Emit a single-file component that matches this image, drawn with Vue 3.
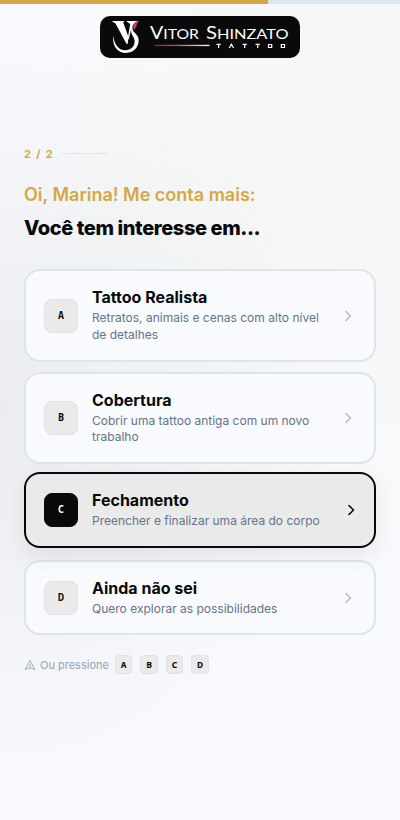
<script setup>
const options = [
  { key: 'A', title: 'Tattoo Realista', text: 'Retratos, animais e cenas com alto nível de detalhes' },
  { key: 'B', title: 'Cobertura', text: 'Cobrir uma tattoo antiga com um novo trabalho' },
  { key: 'C', title: 'Fechamento', text: 'Preencher e finalizar uma área do corpo', active: true },
  { key: 'D', title: 'Ainda não sei', text: 'Quero explorar as possibilidades' }
]
</script>

<template>
  <main class="page">
    <div class="progress"><div class="bar"></div></div>
    <header class="brand">
      <svg width="200" height="42" viewBox="0 0 200 42" role="img" aria-label="Vitor Shinzato Tattoo">
        <defs>
          <linearGradient id="line"><stop offset="0" stop-color="#a51f30" /><stop offset=".4" stop-color="#bd505c" /><stop offset="1" stop-color="#fff" /></linearGradient>
        </defs>
        <path d="M11.700 5H24.500l-1.300 1.500 5.300 14.500L27.600 28h-1L15.500 7.500Z" fill="#fff" />
        <path d="M26 5h13.200c-4.700.8-7.200 3.600-6.700 8 .4 3.800 6.200 5.400 6.200 11.300 0 7.300-5.400 12.600-12.700 12.600-8.300 0-14.200-6.700-12.600-17.500.4 8.200 4.900 14.800 11.900 14.800 5.500 0 9.300-3.700 9.300-9 0-4.600-4-6.200-3.500-11.700L28.600 24l-.7-2.500L30.200 8Z" fill="#fff" />
        <path d="M39.200 5c-3.600.2-6 2.200-6 5.800 0 1.200.6 2.200 1.500 3.200.1-1.500.7-2.700 1.800-3.800.1-2.200 1-3.800 2.700-5.200Z" fill="#d3405a" />
        <g fill="#fff" font-family="Lato, sans-serif">
          <text x="50" y="23" font-size="17" textLength="49" lengthAdjust="spacingAndGlyphs">V<tspan font-size="13.700">ITOR</tspan></text>
          <text x="106" y="23" font-size="17" textLength="82.500" lengthAdjust="spacingAndGlyphs">S<tspan font-size="13.700">HINZATO</tspan></text>
        </g>
        <rect x="54.500" y="28.800" width="55" height="1.300" fill="url(#line)" />
        <path d="M116.500 28.400h4.200M118.600 28.400V32M129.200 32l2.200-3.800 2.200 3.800M142.600 28.400h4.200M144.700 28.400V32M155.600 28.400h4.200M157.700 28.400V32M168.500 28.500h3.200v3h-3.200ZM181.300 28.500h3.200v3h-3.200Z" fill="none" stroke="#fff" stroke-width="1.200" />
      </svg>
    </header>

    <section class="content">
      <div class="step"><span>2 / 2</span><i></i></div>
      <p class="greeting">Oi, Marina! Me conta mais:</p>
      <h1>Você tem interesse em...</h1>
      <div class="options">
        <button v-for="o in options" :key="o.key" class="option" :class="{ active: o.active }">
          <span class="letter">{{ o.key }}</span>
          <span class="copy"><strong>{{ o.title }}</strong><small>{{ o.text }}</small></span>
          <svg class="chevron" width="16" height="16" viewBox="0 0 16 16" fill="none" stroke="currentColor" stroke-width="1.600" stroke-linecap="round" stroke-linejoin="round"><path d="m6 3.500 4.500 4.500L6 12.500" /></svg>
        </button>
      </div>
      <div class="hint">
        <svg width="12" height="12" viewBox="0 0 12 12" fill="none" stroke="currentColor" stroke-width=".9" stroke-linejoin="round"><path d="M6 1.500 10.800 10.500 6 8.700 1.200 10.500ZM6 5v3.700" /></svg>
        <span>Ou pressione</span>
        <kbd v-for="o in options" :key="o.key">{{ o.key }}</kbd>
      </div>
    </section>
  </main>
</template>

<style>
body { margin: 0; }
</style>
<style scoped>
* { box-sizing: border-box; }
.page {
  height: 820px; overflow: hidden; font-family: Inter, sans-serif; color: #0a0a0a;
  background:
    radial-gradient(ellipse 85% 48% at 0% 50%, rgba(10, 10, 10, .06), transparent 100%),
    radial-gradient(ellipse 80% 50% at 90% 20%, rgba(212, 168, 67, .045), rgba(212, 168, 67, .035) 40%, transparent 100%),
    #f8fafd;
}
.progress { height: 4px; background: #dde5ee; }
.bar { width: 67%; height: 100%; background: #d4a843; }
.brand { height: 42px; width: 200px; margin: 12px auto 0; border-radius: 10px; background: #0a0a0a; }
.brand svg { display: block; }
.content { padding: 89px 24px 0; }
.step { display: flex; align-items: center; gap: 7px; height: 13px; color: #d4a843; font-size: 11px; font-weight: 700; letter-spacing: 1.320px; }
.step i { width: 48px; height: 1px; background: #dde5ee; }
.greeting { margin: 21px 0 0; font-size: 18px; line-height: 27px; font-weight: 600; color: #d4a843; }
h1 { margin: 7px 0 0; font-size: 20px; line-height: 26px; font-weight: 800; letter-spacing: -.4px; }
.options { display: flex; flex-direction: column; gap: 10px; margin-top: 28.400px; }
.option {
  display: flex; align-items: center; gap: 14px; width: 352px; padding: 16px 18px;
  border: 2px solid #dde5ec; border-radius: 16px; background: #f8fafd; color: inherit; font: inherit; text-align: left;
}
.option.active { border-color: #0a0a0a; background: #eaeaea; box-shadow: 0 8px 24px rgba(10, 10, 10, .08); transform: translateY(-2px); }
.letter { display: flex; align-items: center; justify-content: center; flex: none; width: 34px; height: 34px; padding-bottom: 2px; border: 1px solid #e0e4e7; border-radius: 8px; background: #eaeaea; font: 700 10px "Noto Sans Mono", "Noto Sans Mono CJK SC", "Noto Sans", sans-serif; }
.active .letter { background: #0a0a0a; border-color: #0a0a0a; color: #fff; }
.copy { flex: 1; display: flex; flex-direction: column; gap: 2px; }
.copy strong { font-size: 16px; line-height: 20.800px; font-weight: 700; }
.copy small { font-size: 12px; line-height: 16.800px; color: #64748b; }
.chevron { flex: none; color: #b9bcc2; }
.active .chevron { color: #0a0a0a; transform: translateX(3px); }
.hint { display: flex; align-items: center; margin-top: 20px; color: #94a3b8; font-size: 11px; }
.hint span { margin: 0 6px 0 4px; }
kbd { display: flex; align-items: center; justify-content: center; width: 17.500px; height: 19px; padding-bottom: 1px; margin-right: 8px; border: 1px solid #dfe3e8; border-radius: 4px; background: #eaeaea; color: #0a0a0a; font: 700 9.500px "Noto Sans Mono", "Noto Sans Mono CJK SC", "Noto Sans", sans-serif; }
</style>
